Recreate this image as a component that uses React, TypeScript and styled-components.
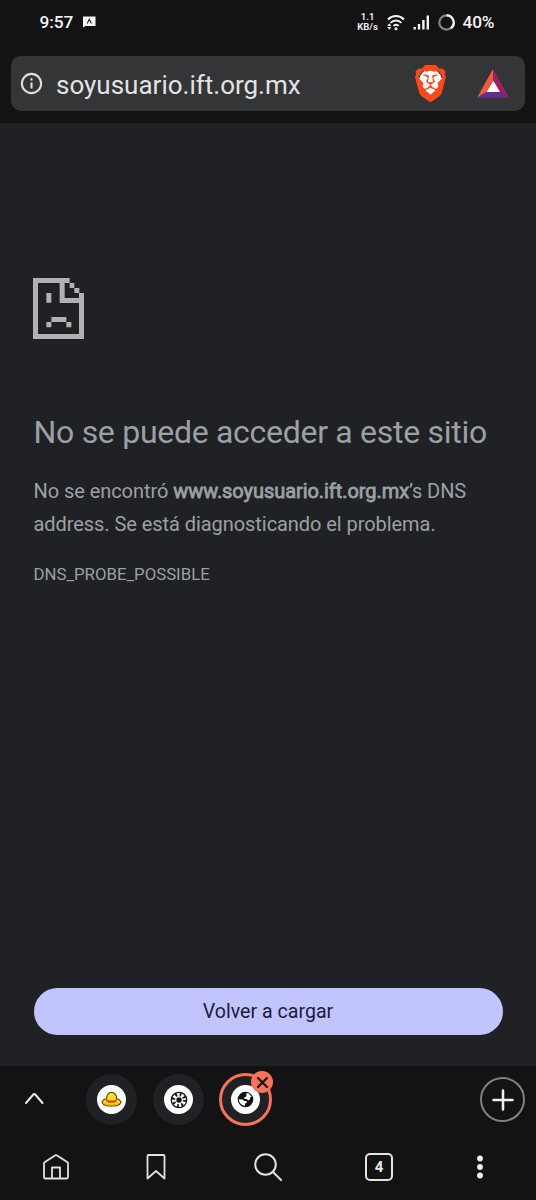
import React from 'react';
import styled, { createGlobalStyle } from 'styled-components';
import { SiBrave } from 'react-icons/si';

const GlobalStyle = createGlobalStyle`
  * { box-sizing: border-box; }
  body { margin: 0; background: #131313; font-family: Roboto, "Liberation Sans", sans-serif; }
  svg { display: block; flex: none; }
  button { font: inherit; border: 0; padding: 0; background: none; color: inherit; }
`;

const Screen = styled.div`
  width: 536px;
  height: 1200px;
  display: flex;
  flex-direction: column;
  background: #131313;
  overflow: hidden;
`;

const StatusBar = styled.header`
  height: 56px;
  padding: 0 41.5px 12px 39.5px;
  display: flex;
  align-items: center;
  justify-content: space-between;
  color: #f4f4f4;
`;

const StatusGroup = styled.div<{ $gap: number }>`
  display: flex;
  align-items: center;
  gap: ${(p) => p.$gap}px;
`;

const StatusText = styled.span`
  font-size: 17.3px;
  line-height: 20px;
  font-weight: 500;
  letter-spacing: -0.1px;
`;

const Speed = styled.span`
  display: flex;
  flex-direction: column;
  align-items: center;
  margin-right: 1px;
  font-size: 9.5px;
  line-height: 10px;
  font-weight: 600;
`;

const Toolbar = styled.div`
  height: 67px;
  padding: 0 11px;
`;

const AddressBar = styled.div`
  height: 55px;
  padding: 0 16px 0 9px;
  display: flex;
  align-items: center;
  border-radius: 10px;
  background: #343537;
`;

const Url = styled.span`
  flex: 1;
  margin-left: 13px;
  padding-top: 3px;
  font-size: 26px;
  line-height: 30px;
  color: #e3e3e5;
`;

const Extensions = styled.div`
  display: flex;
  align-items: center;
  gap: 31px;
`;

const BraveShield = styled.span`
  display: block;
  width: 31px;
  height: 37px;
  color: #fb4a17;
  background: radial-gradient(ellipse 12px 14px at 50% 48%, #fff 97%, transparent 100%);

  svg {
    width: 31px;
    height: 37px;
  }
`;

const Page = styled.main`
  height: 943px;
  padding: 155px 33.5px 0 33.5px;
  display: flex;
  flex-direction: column;
  background: #202124;
  color: #9aa0a6;
`;

const FileIcon = styled.svg`
  margin-left: -0.5px;
`;

const Title = styled.h1`
  margin: 73px 0 0;
  font-size: 32px;
  line-height: 40px;
  font-weight: 400;
  letter-spacing: -0.29px;
  white-space: nowrap;
`;

const Message = styled.p`
  margin: 23px 0 0;
  font-size: 20px;
  line-height: 33px;
  letter-spacing: -0.06px;
  white-space: nowrap;
`;

const Host = styled.span`
  -webkit-text-stroke: 0.8px currentColor;
`;

const ErrorCode = styled.div`
  margin-top: 22px;
  font-size: 16.8px;
  line-height: 22px;
`;

const ReloadButton = styled.button`
  height: 47px;
  margin: auto 0 31px;
  border-radius: 24px;
  background: #c2c4ff;
  color: #1c1b3c;
  font-size: 19.6px;
`;

const TabStrip = styled.div`
  height: 68px;
  padding: 0 11px 1px 23px;
  display: flex;
  align-items: center;
`;

const Chevron = styled.svg`
  margin-bottom: 3px;
`;

const TabList = styled.div`
  flex: 1;
  margin-left: 41px;
  display: flex;
  align-items: center;
  gap: 16px;
`;

const Tab = styled.div<{ $active?: boolean }>`
  position: relative;
  width: ${(p) => (p.$active ? 53 : 51)}px;
  height: ${(p) => (p.$active ? 53 : 51)}px;
  margin-left: ${(p) => (p.$active ? -1 : 0)}px;
  border-radius: 50%;
  border: ${(p) => (p.$active ? '3px solid #f6735a' : '0')};
  background: #202124;
  display: grid;
  place-items: center;
`;

const Favicon = styled.span`
  width: 29px;
  height: 29px;
  border-radius: 50%;
  background: #fff;
  display: grid;
  place-items: center;
`;

const CloseBadge = styled.button`
  position: absolute;
  top: -5px;
  right: -4px;
  width: 22px;
  height: 22px;
  border-radius: 50%;
  background: #f6735a;
  display: grid;
  place-items: center;
`;

const NewTab = styled.button`
  width: 45px;
  height: 45px;
  border: 2.5px solid #808080;
  border-radius: 50%;
  display: grid;
  place-items: center;
`;

const NavBar = styled.nav`
  height: 66px;
  display: grid;
  grid-template-columns: 112px 88px 135px 88px 113px;
`;

const NavItem = styled.button`
  display: grid;
  place-items: center;
`;

const TabCount = styled.span`
  width: 28px;
  height: 28px;
  border: 2px solid #e4e4e4;
  border-radius: 5px;
  display: grid;
  place-items: center;
  color: #e8e8e8;
  font-size: 15px;
  line-height: 24px;
  font-weight: 700;
`;

const SadFile = () => (
  <FileIcon width="51" height="61" viewBox="0 0 153 183" fill="#b1b1b1">
    <path d="M0 0h110v15h14v15h15v15h14v138H0zM15 15v153h123V75H80V15zM95 15v45h43V45h-14V30h-14V15z" fillRule="evenodd" />
    <path d="M40 45h15v29H40zM55 117h45v15H55zM40 132h15v16H40zM100 132h15v16h-15z" />
  </FileIcon>
);

const NotificationIcon = () => (
  <svg width="13" height="12" viewBox="0 0 13 12">
    <path d="M0 .5h12.500v9.500H2.500L0 11.500z" fill="#f4f4f4" />
    <path d="M4.2 7.500L6.300 3.200 8.400 7.500" fill="none" stroke="#222" strokeWidth="1.1" />
  </svg>
);

const WifiIcon = () => (
  <svg width="18" height="17" viewBox="0 0 18 17" fill="none" stroke="#f4f4f4" strokeWidth="1.9">
    <path d="M1 5.500C5.500.900 12.500.900 17 5.500M3.500 8.900c3.200-3.200 7.800-3.200 11 0M6.500 11.900c1.700-1.500 3.700-1.500 5.300 0" />
    <circle cx="9" cy="14.800" r="1.500" fill="#f4f4f4" stroke="none" />
    <path d="M2.300 9.300L4.400 12H.2zM2.300 15.800L4.400 13H.2z" fill="#f4f4f4" stroke="none" />
  </svg>
);

const SignalIcon = () => (
  <svg width="17" height="15" viewBox="0 0 17 15" fill="#f4f4f4">
    <path d="M.5 12h2.400v2.500H.500zM4.800 9h2.400v5.500H4.800zM9.200 5h2.400v9.500H9.200zM13.600.500H16v14h-2.400z" />
  </svg>
);

const BatteryRing = () => (
  <svg width="17" height="17" viewBox="0 0 17 17" fill="none" strokeWidth="2.200">
    <circle cx="8.500" cy="8.500" r="7.200" stroke="#858585" />
    <path d="M8.500 1.300a7.200 7.200 0 0 1 4.300 13" stroke="#f4f4f4" />
  </svg>
);

const InfoIcon = () => (
  <svg width="23" height="23" viewBox="0 0 23 23" fill="none" stroke="#dedee0" strokeWidth="2.100">
    <circle cx="11.500" cy="11.500" r="9.600" />
    <path d="M11.500 10.500v6M11.500 6.300v2.200" />
  </svg>
);

const RewardsIcon = () => (
  <svg width="32" height="29" viewBox="0 0 96 87">
    <path d="M48 0L0 86l30-18 18-32z" fill="#f15a38" />
    <path d="M48 0l48 86-28-18-20-32z" fill="#9e1f63" />
    <path d="M0 86h96L68 68H30z" fill="#662d91" />
    <path d="M49 35L29 69h40z" fill="#fff" />
  </svg>
);

const HatIcon = () => (
  <svg width="21" height="17" viewBox="0 0 21 17">
    <path d="M6 5l1-2 2-1.500h3L14 3l1.500 2.500v2l3 1.500 1.500 2-1.500 2.500-4 1.500h-8l-4-1.500L1 11l1.500-2 3-1.500z" fill="#ffe01c" stroke="#5a4309" strokeWidth="1.100" />
    <path d="M5.500 8L8 9.500h5L15.500 8l.500 2-2.500 1.700h-6L5 10z" fill="#ec3a1c" />
    <path d="M3 12l4 1.700h7l4-1.700" stroke="#f5a81a" fill="none" />
  </svg>
);

const WheelIcon = () => (
  <svg width="18" height="18" viewBox="0 0 18 18" fill="none" stroke="#111">
    <circle cx="9" cy="9" r="7.700" strokeWidth="1.300" />
    <circle cx="9" cy="9" r="5.500" strokeWidth="3.200" strokeDasharray="1.700 2.620" />
    <circle cx="9" cy="9" r="2.700" fill="#111" stroke="none" />
  </svg>
);

const GlobeIcon = () => (
  <svg width="17" height="17" viewBox="0 0 17 17">
    <circle cx="8.500" cy="8.500" r="7.800" fill="#111" />
    <path d="M1.800 8.300l3.700.200 2 1.500h2l.500 1.300-1.800 1.200-.300 2.200C4.500 14.500 2 12 1.800 8.300zM9.500 2.100l2.500.400 2.600 3.300-1.600.700.300 1.500-1.800 1.400-2-1.300-2-.200-.200-1.500 2-1z" fill="#fff" />
  </svg>
);

export default function App() {
  return (
    <Screen>
      <GlobalStyle />
      <StatusBar>
        <StatusGroup $gap={10}>
          <StatusText>9:57</StatusText>
          <NotificationIcon />
        </StatusGroup>
        <StatusGroup $gap={7.9}>
          <Speed>
            <span>1.1</span>
            <span>KB/s</span>
          </Speed>
          <WifiIcon />
          <SignalIcon />
          <BatteryRing />
          <StatusText>40%</StatusText>
        </StatusGroup>
      </StatusBar>
      <Toolbar>
        <AddressBar>
          <InfoIcon />
          <Url>soyusuario.ift.org.mx</Url>
          <Extensions>
            <BraveShield>
              <SiBrave viewBox="1.7 0 20.6 24" preserveAspectRatio="none" />
            </BraveShield>
            <RewardsIcon />
          </Extensions>
        </AddressBar>
      </Toolbar>
      <Page>
        <SadFile />
        <Title>No se puede acceder a este sitio</Title>
        <Message>
          No se encontró <Host>www.soyusuario.ift.org.mx</Host>’s DNS
          <br />
          address. Se está diagnosticando el problema.
        </Message>
        <ErrorCode>DNS_PROBE_POSSIBLE</ErrorCode>
        <ReloadButton>Volver a cargar</ReloadButton>
      </Page>
      <TabStrip>
        <Chevron width="22" height="14" viewBox="0 0 22 14" fill="none" stroke="#e6e6e6" strokeWidth="2" strokeLinecap="round" strokeLinejoin="round">
          <path d="M3 12l7.300-8.500q1-1 2 0L19.500 12" />
        </Chevron>
        <TabList>
          <Tab><Favicon><HatIcon /></Favicon></Tab>
          <Tab><Favicon><WheelIcon /></Favicon></Tab>
          <Tab $active>
            <Favicon><GlobeIcon /></Favicon>
            <CloseBadge>
              <svg width="13" height="13" viewBox="0 0 13 13" stroke="#1b1412" strokeWidth="2.200" strokeLinecap="round">
                <path d="M2 2l9 9M11 2l-9 9" />
              </svg>
            </CloseBadge>
          </Tab>
        </TabList>
        <NewTab>
          <svg width="22" height="22" viewBox="0 0 22 22" stroke="#f0f0f0" strokeWidth="2.500" strokeLinecap="round">
            <path d="M11 1.500v19M1.500 11h19" />
          </svg>
        </NewTab>
      </TabStrip>
      <NavBar>
        <NavItem>
          <svg width="26" height="26" viewBox="0 0 26 26" fill="none" stroke="#e2e2e2" strokeWidth="1.800" strokeLinejoin="round">
            <path d="M1 9.500q0-1 .900-1.500L12 1.500q1-.600 2 0L24.200 8q.800.500.800 1.500V23q0 1.500-1.500 1.500h-21Q1 24.500 1 23zM9 24.500v-11h8v11" />
          </svg>
        </NavItem>
        <NavItem>
          <svg width="20" height="26" viewBox="0 0 20 26" fill="none" stroke="#e2e2e2" strokeWidth="1.800" strokeLinejoin="round">
            <path d="M1.500 2q0-1 1-1h15q1 0 1 1v22.500L10 17l-8.500 7.500z" />
          </svg>
        </NavItem>
        <NavItem>
          <svg width="28" height="28" viewBox="0 0 28 28" fill="none" stroke="#e2e2e2" strokeWidth="2" strokeLinecap="round">
            <circle cx="11.500" cy="11.500" r="10.300" />
            <path d="M19 19l8 8" />
          </svg>
        </NavItem>
        <NavItem>
          <TabCount>4</TabCount>
        </NavItem>
        <NavItem>
          <svg width="6" height="24" viewBox="0 0 6 24" fill="#f0f0f0">
            <circle cx="3" cy="3.500" r="2.900" />
            <circle cx="3" cy="12" r="2.900" />
            <circle cx="3" cy="20.500" r="2.900" />
          </svg>
        </NavItem>
      </NavBar>
    </Screen>
  );
}
